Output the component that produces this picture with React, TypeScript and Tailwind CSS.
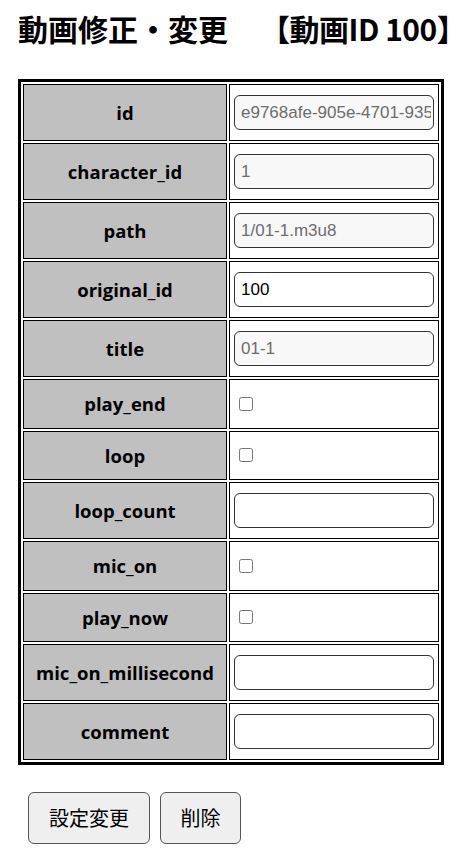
const rows: { label: string; kind: "text" | "check"; value?: string; readOnly?: boolean }[] = [
  { label: "id", kind: "text", value: "e9768afe-905e-4701-935", readOnly: true },
  { label: "character_id", kind: "text", value: "1", readOnly: true },
  { label: "path", kind: "text", value: "1/01-1.m3u8", readOnly: true },
  { label: "original_id", kind: "text", value: "100" },
  { label: "title", kind: "text", value: "01-1", readOnly: true },
  { label: "play_end", kind: "check" },
  { label: "loop", kind: "check" },
  { label: "loop_count", kind: "text", value: "" },
  { label: "mic_on", kind: "check" },
  { label: "play_now", kind: "check" },
  { label: "mic_on_millisecond", kind: "text", value: "" },
  { label: "comment", kind: "text", value: "" },
];

const cjk = "font-['Noto_Sans_CJK_JP',sans-serif]";

export default function App() {
  return (
    <div className="min-h-[857px] bg-white px-[18px] pt-[8px] text-black">
      <h1 className={`${cjk} flex text-[30px] font-bold leading-[40px] whitespace-nowrap`}>
        <span>動画修正・変更</span>
        <span className="ml-[32px] tracking-[-0.5px]">【動画ID 100】</span>
      </h1>

      <table className="mt-[31px] w-[426px] border-separate border-spacing-[2px] border-[3px] border-black">
        <tbody>
          {rows.map((row) => (
            <tr key={row.label}>
              <th className="w-[204px] border border-black bg-[#c0c0c0] px-1 py-[10px] text-center align-middle font-['Open_Sans',sans-serif] text-[18.5px] font-bold leading-[27.5px]">
                {row.label}
              </th>
              <td className="border border-black px-1 py-[10px] align-middle">
                {row.kind === "check" ? (
                  <input type="checkbox" className="ml-[5px] block h-[14px] w-[14px]" readOnly />
                ) : (
                  <input
                    type="text"
                    defaultValue={row.value}
                    readOnly={row.readOnly}
                    className={`block h-[35px] w-[200px] rounded-[6px] border border-[#333] pl-[6px] pr-[2px] font-['Liberation_Sans',sans-serif] text-[17px] outline-none ${
                      row.readOnly ? "bg-[#f8f8f8] text-[#6d6d6d]" : "bg-white text-black"
                    }`}
                  />
                )}
              </td>
            </tr>
          ))}
        </tbody>
      </table>

      <div className={`${cjk} mt-[27px] ml-[10px] flex gap-[10px]`}>
        <button className="h-[52px] w-[122px] rounded-[6px] border border-[#555] bg-[#efefef] text-[20px]">
          設定変更
        </button>
        <button className="h-[52px] w-[81px] rounded-[6px] border border-[#555] bg-[#efefef] text-[20px]">
          削除
        </button>
      </div>
    </div>
  );
}
